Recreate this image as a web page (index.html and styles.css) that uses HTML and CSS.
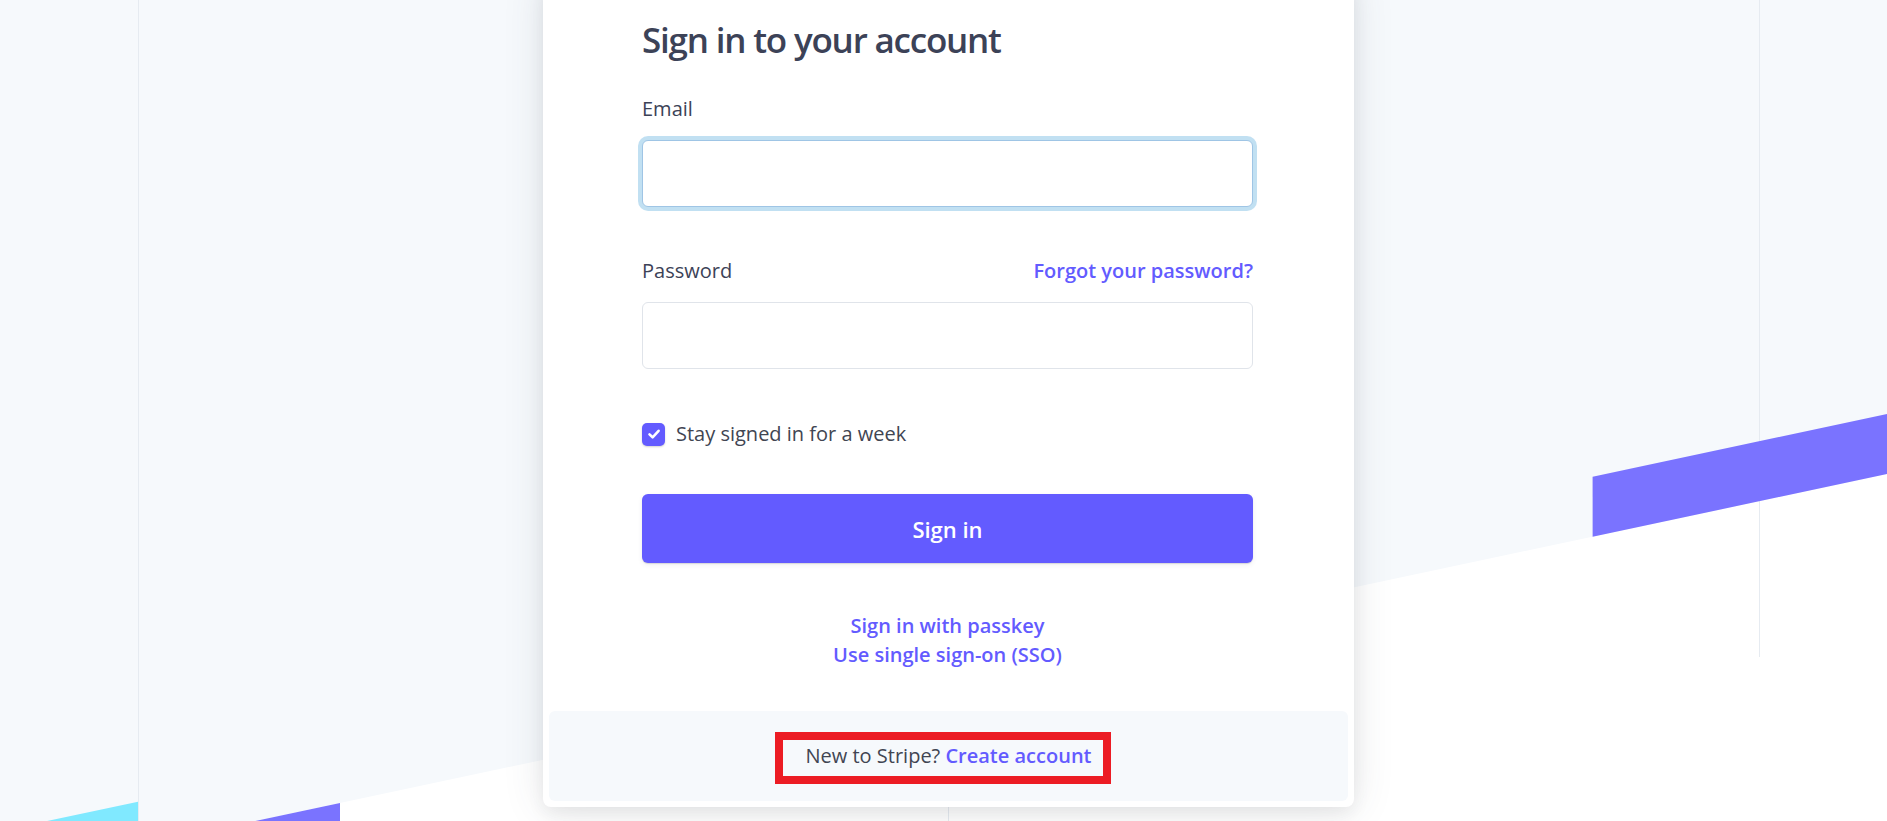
FILE: index.html
```html
<!DOCTYPE html>
<html lang="en">
<head>
<meta charset="utf-8">
<title>Sign in – Stripe</title>
<link rel="stylesheet" href="styles.css">
</head>
<body>
<div class="bg" aria-hidden="true">
  <svg class="bg-svg" width="1887" height="821" viewBox="0 0 1887 821" xmlns="http://www.w3.org/2000/svg">
    <rect x="0" y="0" width="1887" height="821" fill="#f6f9fc"/>
    <polygon points="0,875.3 1887,474.1 1887,821 0,821" fill="#ffffff"/>
    <line x1="138.5" y1="0" x2="138.5" y2="821" stroke="#e6ebf1" stroke-width="1"/>
    <line x1="948.5" y1="0" x2="948.5" y2="821" stroke="#e6ebf1" stroke-width="1"/>
    <line x1="1759.5" y1="0" x2="1759.5" y2="657" stroke="#e6ebf1" stroke-width="1"/>
    <polygon points="1592.6,476.7 1887,414.1 1887,474.1 1592.6,536.7" fill="#7a73ff"/>
    <polygon points="340,803 340,900 150,900 150,843.4" fill="#7a73ff"/>
    <polygon points="138,801.7 138,900 0,900 0,831" fill="#80e9ff"/>
  </svg>
</div>

<main class="page">
  <div class="card">
    <div class="card-body">
      <h1 class="title">Sign in to your account</h1>
      <form class="form">
        <div class="field">
          <label class="label" for="email">Email</label>
          <input class="input input-focus" id="email" type="email">
        </div>
        <div class="field field-password">
          <div class="label-row">
            <label class="label" for="password">Password</label>
            <a class="link" href="#">Forgot your password?</a>
          </div>
          <input class="input" id="password" type="password">
        </div>
        <label class="check-row">
          <span class="checkbox">
            <svg width="14" height="14" viewBox="0 0 14 14"><path d="M2.5 7.4 L5.6 10.3 L11.6 3.8" fill="none" stroke="#ffffff" stroke-width="2.6" stroke-linecap="round" stroke-linejoin="round"/></svg>
          </span>
          <span class="check-text">Stay signed in for a week</span>
        </label>
        <button class="btn" type="button">Sign in</button>
      </form>
      <div class="alt-links">
        <a class="link" href="#">Sign in with passkey</a>
        <a class="link" href="#">Use single sign-on (SSO)</a>
      </div>
    </div>
    <div class="card-footer">
      <span class="footer-text">New to Stripe? <a class="link" href="#">Create account</a></span>
      <div class="annot"></div>
    </div>
  </div>
</main>
</body>
</html>
```

FILE: styles.css
```css
html, body {
  margin: 0;
  height: 100%;
  overflow: hidden;
}

body {
  position: relative;
  background: #f6f9fc;
  font-family: "Open Sans", "Noto Sans", sans-serif;
  color: #3c4257;
}

.bg {
  position: absolute;
  left: 0;
  top: 0;
  z-index: 0;
}

.bg-svg {
  display: block;
}

.page {
  position: relative;
  z-index: 1;
  display: flex;
  justify-content: center;
  padding-left: 10px;
}

.card {
  width: 811px;
  box-sizing: border-box;
  margin-top: -20px;
  background: #ffffff;
  border-radius: 0 0 8px 8px;
  padding: 0 6px 6px;
  box-shadow: 0 0 40px rgba(60, 66, 87, 0.13), 0 8px 18px rgba(0, 0, 0, 0.06);
}

.card-body {
  padding: 36px 95px 0 93px;
}

.title {
  margin: 0;
  font-size: 35px;
  line-height: 48px;
  font-weight: 600;
  letter-spacing: -1.2px;
  color: #3c4257;
}

.form {
  display: flex;
  flex-direction: column;
  margin-top: 30px;
}

.label {
  display: block;
  font-size: 20px;
  line-height: 30px;
  font-weight: 500;
  color: #3c4257;
}

.input {
  display: block;
  width: 100%;
  height: 67px;
  box-sizing: border-box;
  margin-top: 16px;
  border: 1px solid #e0e4ea;
  border-radius: 6px;
  background: #ffffff;
  outline: none;
}

.input-focus {
  border-color: #9fc5e5;
  box-shadow: 0 0 0 4px rgba(50, 151, 211, 0.3);
}

.field-password {
  margin-top: 49px;
}

.label-row {
  display: flex;
  justify-content: space-between;
  align-items: baseline;
}

.link {
  color: #635bff;
  font-weight: 600;
  font-size: 20px;
  line-height: 30px;
  text-decoration: none;
}

.check-row {
  margin-top: 50px;
  display: flex;
  align-items: center;
  gap: 11px;
  font-size: 20px;
  line-height: 30px;
  color: #414552;
}

.checkbox {
  width: 23px;
  height: 23px;
  flex: none;
  border-radius: 5px;
  background: #635bff;
  display: flex;
  align-items: center;
  justify-content: center;
  box-shadow: 0 1px 2px rgba(0, 0, 0, 0.18);
}

.checkbox svg {
  display: block;
}

.btn {
  margin-top: 45px;
  height: 69px;
  border: 0;
  border-radius: 6px;
  background: #635bff;
  color: #ffffff;
  font-family: inherit;
  font-size: 22px;
  line-height: 30px;
  font-weight: 600;
  box-shadow: 0 1px 1px rgba(0, 0, 0, 0.12), 0 2px 5px rgba(60, 66, 87, 0.08);
}

.alt-links {
  margin-top: 48px;
  display: flex;
  flex-direction: column;
  align-items: center;
}

.alt-links .link {
  line-height: 29.4px;
}

.card-footer {
  position: relative;
  margin-top: 41.5px;
  background: #f6f9fc;
  border-radius: 6px;
  padding: 30px 0;
  text-align: center;
  font-size: 20px;
  line-height: 30px;
  color: #414552;
}

.annot {
  position: absolute;
  left: 226px;
  top: 21px;
  width: 336px;
  height: 52px;
  box-sizing: border-box;
  border: 8px solid #ec1c24;
}
```
